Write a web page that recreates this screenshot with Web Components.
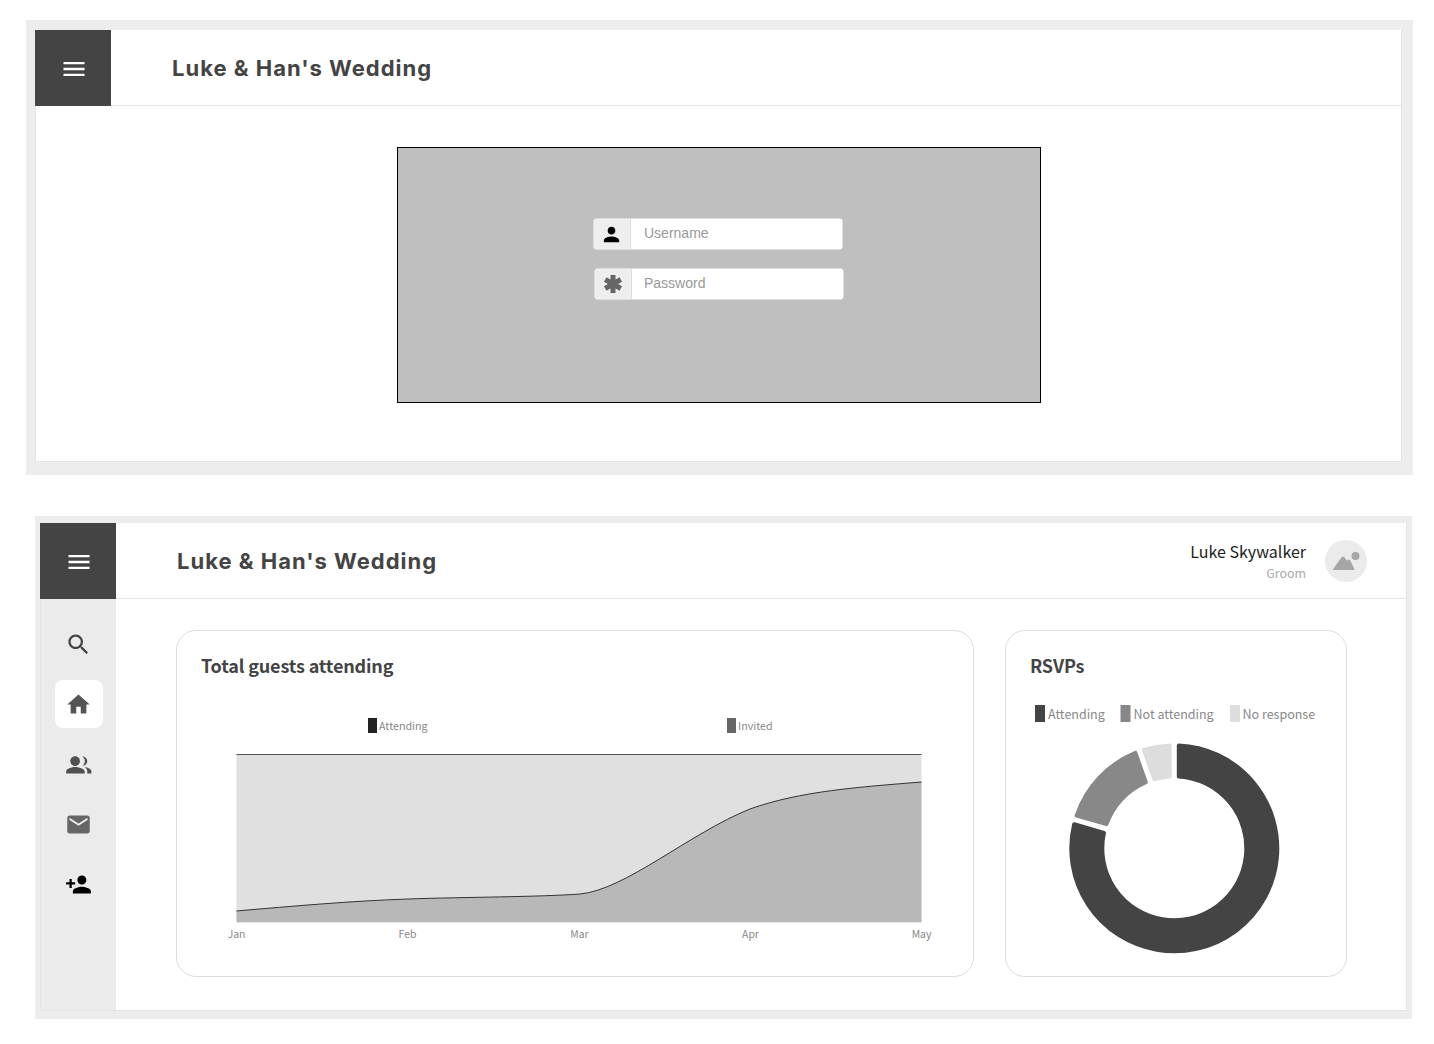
<!DOCTYPE html>
<html lang="en">
<head>
<meta charset="utf-8">
<title>Luke & Han's Wedding</title>
<style>
  html, body { margin: 0; padding: 0; background: #fff; }
  body { font-family: "Noto Sans CJK SC", "Liberation Sans", sans-serif; color: #444; }
  .first { --frame-w: 1387px; --frame-h: 455px; --frame-ml: 26px; --frame-mt: 20px; --bt: 10px; --br: 11px; --bb: 13px; --bl: 9px; }
  .second { --frame-w: 1377px; --frame-h: 503px; --frame-ml: 35px; --frame-mt: 41px; --bt: 7px; --br: 5px; --bb: 8px; --bl: 5px; }
</style>
</head>
<body>

<wedding-frame class="first">
  <top-bar>Luke &amp; Han's Wedding</top-bar>
  <login-panel></login-panel>
</wedding-frame>

<wedding-frame class="second">
  <top-bar>
    Luke &amp; Han's Wedding
    <user-badge slot="right" name="Luke Skywalker" role="Groom"></user-badge>
  </top-bar>
  <div style="display:flex;flex:1;min-height:0">
    <side-nav></side-nav>
    <dash-board></dash-board>
  </div>
</wedding-frame>

<script>
// material icon paths
const ICONS = {
  menu: 'M3 18h18v-2H3v2zm0-5h18v-2H3v2zm0-7v2h18V6H3z',
  search: 'M15.5 14h-.79l-.28-.27C15.41 12.59 16 11.11 16 9.5 16 5.91 13.09 3 9.5 3S3 5.91 3 9.5 5.91 16 9.5 16c1.61 0 3.09-.59 4.23-1.57l.27.28v.79l5 4.99L20.49 19l-4.99-5zm-6 0C7.01 14 5 11.99 5 9.5S7.01 5 9.5 5 14 7.01 14 9.5 11.99 14 9.5 14z',
  home: 'M10 20v-6h4v6h5v-8h3L12 3 2 12h3v8z',
  people: 'M9 13.300c2.400 0 4.300-1.900 4.300-4.300S11.400 4.700 9 4.700 4.700 6.600 4.700 9 6.600 13.300 9 13.300zM9 14.300c-2.800 0-8 1.400-8 4.100V20h16.500v-1.600c0-2.700-5.700-4.100-8.500-4.100zM15.500 4.800c1.300 1 2.100 2.500 2.100 4.200s-.8 3.200-2.100 4.200c2.300 0 4.300-1.900 4.300-4.200S17.800 4.800 15.500 4.800zM17.500 14.200c1.500 1 2.300 2.400 2.300 4V20h3.700v-1.800c0-2.300-3.400-3.600-6-4z',
  email: 'M20 4H4c-1.100 0-1.990.9-1.990 2L2 18c0 1.100.9 2 2 2h16c1.100 0 2-.9 2-2V6c0-1.100-.9-2-2-2zm0 4l-8 5-8-5V6l8 5 8-5v2z',
  personAdd: 'M15 12c2.210 0 4-1.790 4-4s-1.790-4-4-4-4 1.790-4 4 1.790 4 4 4zm-9-2V7H4v3H1v2h3v3h2v-3h3v-2H6zm9 4c-2.670 0-8 1.340-8 4v2h16v-2c0-2.660-5.330-4-8-4z',
  person: 'M12 12c2.210 0 4-1.790 4-4s-1.790-4-4-4-4 1.790-4 4 1.790 4 4 4zm0 2c-2.670 0-8 1.340-8 4v2h16v-2c0-2.660-5.330-4-8-4z'
};

function icon(name, size, color) {
  return `<svg width="${size}" height="${size}" viewBox="0 0 24 24" fill="${color}" style="display:block"><path d="${ICONS[name]}"/></svg>`;
}

class WeddingFrame extends HTMLElement {
  constructor() {
    super();
    this.attachShadow({mode: 'open'});
    this.shadowRoot.innerHTML = `
      <style>
        :host {
          display: block;
          box-sizing: border-box;
          width: var(--frame-w);
          height: var(--frame-h);
          margin: var(--frame-mt) 0 0 var(--frame-ml);
          border-style: solid;
          border-color: #ededed;
          border-width: var(--bt) var(--br) var(--bb) var(--bl);
        }
        .inner {
          box-sizing: border-box;
          height: 100%;
          display: flex;
          flex-direction: column;
          background: #fff;
          border: 1px solid #e4e4e4;
          border-top: 0;
        }
      </style>
      <div class="inner"><slot></slot></div>`;
  }
}
customElements.define('wedding-frame', WeddingFrame);

class TopBar extends HTMLElement {
  constructor() {
    super();
    this.attachShadow({mode: 'open'});
    this.shadowRoot.innerHTML = `
      <style>
        :host {
          display: flex;
          flex: none;
          align-items: center;
          height: 76px;
          margin-left: -1px;
          border-bottom: 1px solid #e4e4e4;
          box-sizing: border-box;
        }
        .burger {
          flex: none;
          width: 76px;
          height: 76px;
          margin-bottom: -1px;
          background: #444;
          display: flex;
          align-items: center;
          justify-content: center;
          padding: 1px 0 0 1px;
          box-sizing: border-box;
        }
        h1 {
          margin: 0 0 0 61px;
          font: 700 22px "Inter", "Liberation Sans", sans-serif;
          letter-spacing: 1px;
          color: #444;
          white-space: nowrap;
        }
        .right { margin-left: auto; }
      </style>
      <div class="burger">${icon('menu', 28, '#fff')}</div>
      <h1><slot></slot></h1>
      <div class="right"><slot name="right"></slot></div>`;
  }
}
customElements.define('top-bar', TopBar);

class UserBadge extends HTMLElement {
  connectedCallback() {
    const shadow = this.attachShadow({mode: 'open'});
    shadow.innerHTML = `
      <style>
        :host { display: flex; align-items: center; gap: 19px; padding-right: 39px; }
        .who { text-align: right; }
        .name { font-size: 16px; line-height: 24px; color: #222; }
        .role { font-size: 12.4px; line-height: 18px; color: #aaa; margin-top: 1px; }
        .pic {
          width: 42px; height: 42px; border-radius: 50%; background: #ebebeb;
          display: flex; align-items: center; justify-content: center;
        }
      </style>
      <div class="who">
        <div class="name">${this.getAttribute('name')}</div>
        <div class="role">${this.getAttribute('role')}</div>
      </div>
      <div class="pic">
        <svg width="42" height="42" viewBox="0 0 42 42" fill="#a6a6a6" style="display:block">
          <circle cx="30.500" cy="16" r="4"/>
          <path d="M8.500 30 Q7.700 30 8.200 29 L16.800 17 Q18 15.800 19.200 17 L22 20.700 L23 19.800 Q24 19 25 20 L29.300 28.800 Q29.800 30 28.600 30 Z"/>
        </svg>
      </div>`;
  }
}
customElements.define('user-badge', UserBadge);

class LoginField extends HTMLElement {
  connectedCallback() {
    const shadow = this.attachShadow({mode: 'open'});
    const isPw = this.getAttribute('type') === 'password';
    const glyph = isPw
      ? `<svg width="20" height="20" viewBox="0 0 20 20" stroke="#666" stroke-width="5" style="display:block">
           <path d="M10 1v18M2.200 5.500l15.600 9M2.200 14.500l15.600-9"/></svg>`
      : icon('person', 23, '#000');
    shadow.innerHTML = `
      <style>
        :host {
          display: flex;
          width: 250px;
          height: 32px;
          box-sizing: border-box;
          border: 1px solid #ddd;
          border-radius: 4px;
          background: #fff;
          overflow: hidden;
        }
        .addon {
          flex: none;
          width: 36px;
          box-sizing: content-box;
          background: #eee;
          border-right: 1px solid #ddd;
          display: flex;
          align-items: center;
          justify-content: center;
        }
        .addon svg { margin-right: ${isPw ? 0 : 2}px; }
        input {
          flex: 1;
          min-width: 0;
          border: 0;
          outline: 0;
          padding: 0 0 2px ${isPw ? 12 : 13}px;
          font: 14px "Liberation Sans", Arial, sans-serif;
          background: #fff;
        }
        input::placeholder { color: #999; opacity: 1; }
      </style>
      <div class="addon">${glyph}</div>
      <input placeholder="${this.getAttribute('placeholder')}" type="${isPw ? 'password' : 'text'}">`;
  }
}
customElements.define('login-field', LoginField);

class LoginPanel extends HTMLElement {
  constructor() {
    super();
    this.attachShadow({mode: 'open'});
    this.shadowRoot.innerHTML = `
      <style>
        :host { display: block; padding: 41px 0 0 361px; }
        .box {
          box-sizing: border-box;
          width: 644px;
          height: 256px;
          background: #bfbfbf;
          border: 1px solid #000;
          padding: 70px 0 0 195px;
          display: flex;
          flex-direction: column;
          gap: 18px;
        }
        .pw { margin-left: 1px; }
      </style>
      <div class="box">
        <login-field placeholder="Username"></login-field>
        <login-field class="pw" type="password" placeholder="Password"></login-field>
      </div>`;
  }
}
customElements.define('login-panel', LoginPanel);

class SideNav extends HTMLElement {
  constructor() {
    super();
    this.attachShadow({mode: 'open'});
    const items = [['search', '#444'], ['home', '#555', true], ['people', '#505050'], ['email', '#666'], ['personAdd', '#000']];
    this.shadowRoot.innerHTML = `
      <style>
        :host {
          display: flex;
          flex: none;
          flex-direction: column;
          align-items: center;
          gap: 12px;
          width: 75px;
          padding-top: 21px;
          box-sizing: border-box;
          background: #ebebeb;
        }
        .item {
          width: 48px; height: 48px; border-radius: 8px;
          display: flex; align-items: center; justify-content: center;
        }
        .on { background: #fff; }
      </style>
      ${items.map(i => `<div class="item ${i[2] ? 'on' : ''}">${icon(i[0], 27, i[1])}</div>`).join('')}`;
  }
}
customElements.define('side-nav', SideNav);

class DashCard extends HTMLElement {
  constructor() {
    super();
    this.attachShadow({mode: 'open'});
    this.shadowRoot.innerHTML = `
      <style>
        :host {
          display: block;
          box-sizing: border-box;
          height: 347px;
          border: 1px solid #ddd;
          border-radius: 20px;
          background: #fff;
          overflow: hidden;
        }
        h2 {
          margin: 0;
          padding: 20px 24px 0;
          font-size: 18px;
          font-weight: 600;
          letter-spacing: -0.15px;
          line-height: 29px;
          height: 30px;
          color: #444;
        }
      </style>
      <h2>${this.getAttribute('heading')}</h2>
      <slot></slot>`;
  }
}
customElements.define('dash-card', DashCard);

class AreaChart extends HTMLElement {
  constructor() {
    super();
    this.attachShadow({mode: 'open'});
    const curve = 'M236.500 911 C294 906 351 901 408 899 C465 897 540 897 580 894 C625 890 690 833 750 809 C800 791 860 787 921.500 782';
    const months = [['Jan', 236.500], ['Feb', 407.500], ['Mar', 579.500], ['Apr', 750.500], ['May', 921.500]];
    // viewBox uses page coordinates, easier to read off the design
    this.shadowRoot.innerHTML = `
      <style>
        :host { display: block; }
        svg { display: block; font-family: "Noto Sans CJK SC", "Liberation Sans", sans-serif; }
        .leg { font-size: 10.700px; fill: #888; }
        .ax { font-size: 10.400px; fill: #888; text-anchor: middle; }
      </style>
      <svg width="796" height="296" viewBox="177 681 796 296">
        <rect x="368" y="718" width="9" height="15" fill="#222"/>
        <text class="leg" x="379" y="730">Attending</text>
        <rect x="727" y="718" width="9" height="15" fill="#666"/>
        <text class="leg" x="738" y="730">Invited</text>
        <rect x="236.500" y="754" width="685" height="168" fill="#e0e0e0"/>
        <path d="${curve} L921.500 922 L236.500 922 Z" fill="#b8b8b8"/>
        <path d="${curve}" fill="none" stroke="#333" stroke-width="1"/>
        <path d="M236.500 754.500 H921.500" stroke="#555" stroke-width="1"/>
        <path d="M236.500 922.500 H921.500" stroke="#e4e4e4" stroke-width="1"/>
        ${months.map(m => `<text class="ax" x="${m[1]}" y="938">${m[0]}</text>`).join('')}
      </svg>`;
  }
}
customElements.define('area-chart', AreaChart);

// ring segment with parallel gaps, corners rounded by the stroke
function ringSlice(cx, cy, ro, ri, a0, a1, gap) {
  const pt = (r, a) => [cx + r * Math.sin(a), cy - r * Math.cos(a)];
  const rad = d => d * Math.PI / 180;
  const s = (r) => Math.asin(gap / r);
  const p1 = pt(ro, rad(a0) + s(ro)), p2 = pt(ro, rad(a1) - s(ro));
  const p3 = pt(ri, rad(a1) - s(ri)), p4 = pt(ri, rad(a0) + s(ri));
  const big = a1 - a0 > 180 ? 1 : 0;
  const f = n => n.toFixed(2);
  return `M${f(p1[0])} ${f(p1[1])}A${ro} ${ro} 0 ${big} 1 ${f(p2[0])} ${f(p2[1])}L${f(p3[0])} ${f(p3[1])}A${ri} ${ri} 0 ${big} 0 ${f(p4[0])} ${f(p4[1])}Z`;
}

class DonutChart extends HTMLElement {
  constructor() {
    super();
    this.attachShadow({mode: 'open'});
    const parts = [[0, 286, '#444'], [286, 340.300, '#888'], [340.300, 360, '#ddd']];
    const slices = parts.map(p =>
      `<path d="${ringSlice(1174.300, 848.300, 103, 72, p[0], p[1], 4.500)}" fill="${p[2]}" stroke="${p[2]}" stroke-width="4" stroke-linejoin="round"/>`
    ).join('');
    this.shadowRoot.innerHTML = `
      <style>
        :host { display: block; }
        svg { display: block; font-family: "Noto Sans CJK SC", "Liberation Sans", sans-serif; }
        .leg { font-size: 12.500px; fill: #888; }
      </style>
      <svg width="340" height="296" viewBox="1006 681 340 296">
        <rect x="1035" y="705" width="10" height="17" fill="#444"/>
        <text class="leg" x="1048" y="719">Attending</text>
        <rect x="1120.500" y="705" width="10" height="17" fill="#888"/>
        <text class="leg" x="1133.500" y="719">Not attending</text>
        <rect x="1230" y="705" width="10" height="17" fill="#ddd"/>
        <text class="leg" x="1242.500" y="719">No response</text>
        ${slices}
      </svg>`;
  }
}
customElements.define('donut-chart', DonutChart);

class DashBoard extends HTMLElement {
  constructor() {
    super();
    this.attachShadow({mode: 'open'});
    this.shadowRoot.innerHTML = `
      <style>
        :host {
          display: grid;
          flex: 1;
          grid-template-columns: 798px 342px;
          column-gap: 31px;
          align-items: start;
          padding: 31px 0 0 60px;
        }
      </style>
      <dash-card heading="Total guests attending"><area-chart></area-chart></dash-card>
      <dash-card heading="RSVPs"><donut-chart></donut-chart></dash-card>`;
  }
}
customElements.define('dash-board', DashBoard);
</script>
</body>
</html>
